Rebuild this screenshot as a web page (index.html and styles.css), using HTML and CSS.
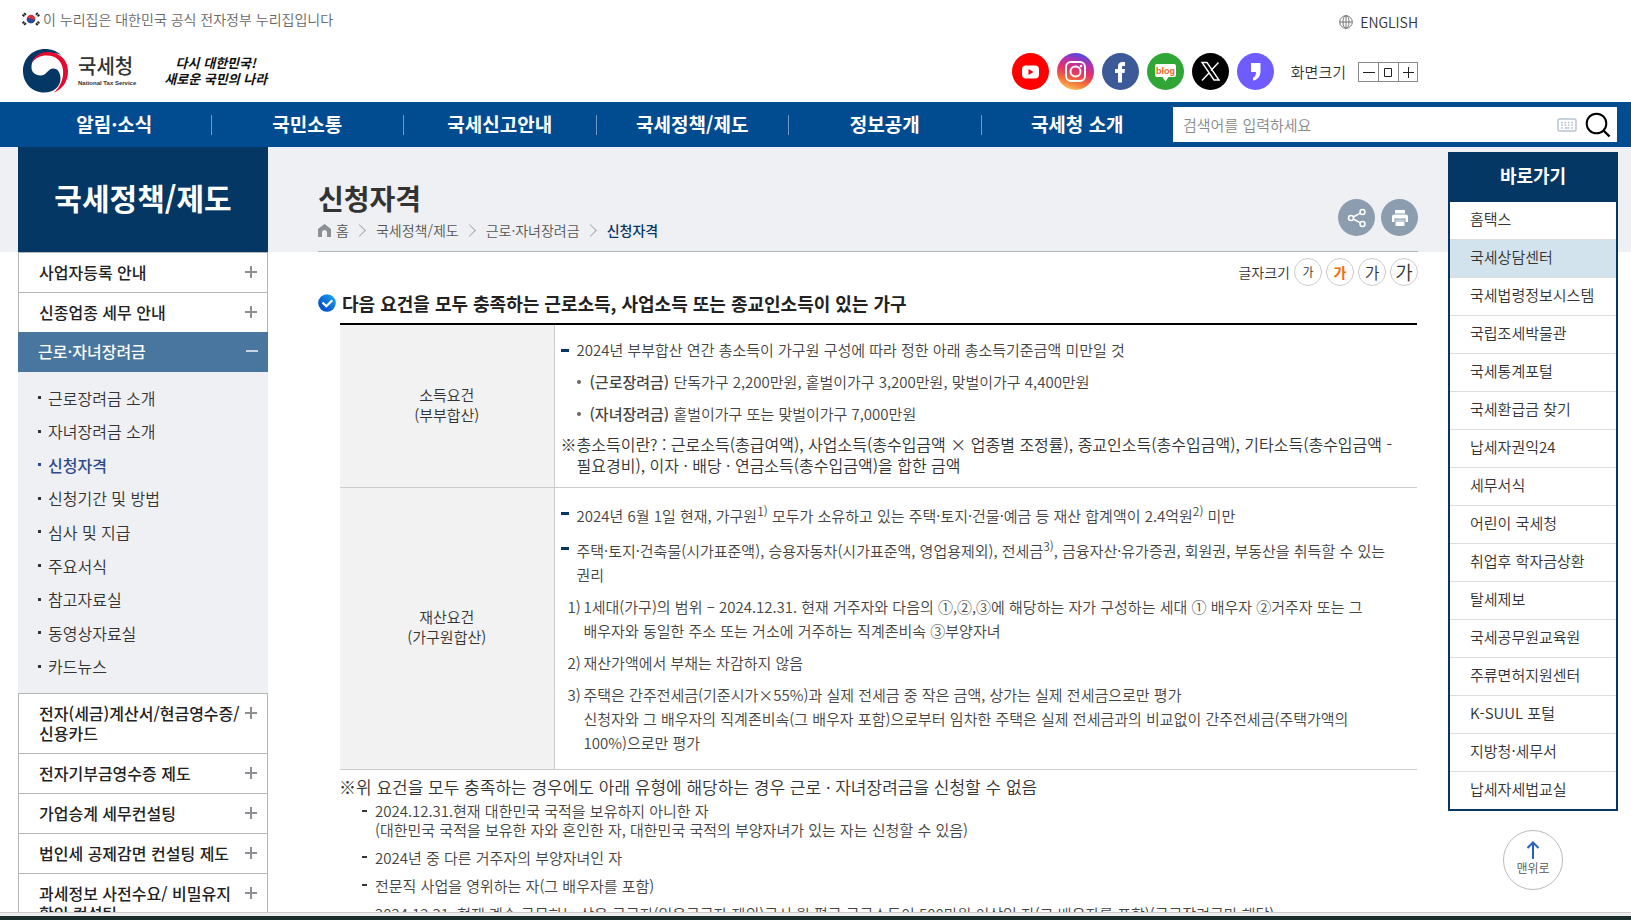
FILE: index.html
```html
<!DOCTYPE html>
<html lang="ko">
<head>
<meta charset="utf-8">
<title>신청자격 | 국세청</title>
<link rel="stylesheet" href="styles.css">
</head>
<body>
<div class="page">
  <header class="header">
    <div class="brand">
      <p class="gov">
        <svg width="18" height="14" viewBox="0 0 18 14" aria-hidden="true">
          <circle cx="9" cy="7" r="4.3" fill="#d9303e"/>
          <path d="M4.700 7a4.300 4.300 0 0 0 8.600 0c-1.500 1.200-3 .8-4.300 0s-3-1.600-4.300 0z" fill="#1d4fa3"/>
          <path d="M.8 4.200 3.800 1.200M14.200 1.200l3 3M.8 9.800l3 3M14.200 12.800l3-3" stroke="#222" stroke-width="2.600" stroke-dasharray="1.800 .5"/>
        </svg>
        <span>이 누리집은 대한민국 공식 전자정부 누리집입니다</span>
      </p>
      <div class="logos">
        <a class="logo" href="#">
          <svg width="45" height="44" viewBox="0 0 45 44" aria-hidden="true">
            <path d="M38 6C34 2 28 0 22 0 9 0 0 10 0 22s9 21.500 21 21.500c10 0 16.500-6 16.500-14 0-6-3-10-7-10-6 0-6.500 7-13 7C12 26.500 8 23 8.500 17 9 10 15 4.500 23 4c6-.3 11 0 15 2z" fill="#043763"/>
            <path d="M9 14C11 7 17 3 24 3c12 0 21 7.500 21 19 0 10-5 18-14 21.500C37 38 41 30 40 21 39 12 33 6.500 24 6.500 17 6.500 12 9 9 14z" fill="#e6092f"/>
          </svg>
          <span class="logo-text"><strong>국세청</strong><small>National Tax Service</small></span>
        </a>
        <p class="slogan"><span>다시 대한민국!</span><span>새로운 국민의 나라</span></p>
      </div>
    </div>
    <div class="utility">
      <a class="english" href="#">
        <svg width="14" height="14" viewBox="0 0 14 14" fill="none" stroke="#777" aria-hidden="true"><circle cx="7" cy="7" r="6.300"/><ellipse cx="7" cy="7" rx="3" ry="6.300"/><path d="M.7 7h12.600M7 .7v12.600"/></svg>
        ENGLISH</a>
      <div class="tools">
        <ul class="social">
          <li><a href="#" aria-label="유튜브"><svg viewBox="0 0 37 37"><circle cx="18.500" cy="18.500" r="18.500" fill="#fe0000"/><rect x="10" y="12.500" width="17" height="13" rx="4" fill="#fff"/><path d="m16.500 16 5 3-5 3z" fill="#fe0000"/></svg></a></li>
          <li><a href="#" aria-label="인스타그램"><svg viewBox="0 0 37 37"><defs><linearGradient id="ig" x1=".3" y1="1" x2=".6" y2="0"><stop offset="0" stop-color="#fcc755"/><stop offset=".25" stop-color="#f4703a"/><stop offset=".5" stop-color="#e73462"/><stop offset=".75" stop-color="#b830a8"/><stop offset="1" stop-color="#4b4ae6"/></linearGradient></defs><circle cx="18.500" cy="18.500" r="18.500" fill="url(#ig)"/><g fill="none" stroke="#fff" stroke-width="2"><rect x="9" y="9" width="19" height="19" rx="5"/><circle cx="18.500" cy="18.500" r="5"/></g><circle cx="24" cy="13" r="1.300" fill="#fff"/></svg></a></li>
          <li><a href="#" aria-label="페이스북"><svg viewBox="0 0 37 37"><circle cx="18.500" cy="18.500" r="18.500" fill="#3c5a98"/><path d="M16 29.500V20h-3v-4h3v-2.500c0-3 1.600-4.500 4.500-4.500H23v4h-1.800c-1 0-1.200.5-1.200 1.300V16h3l-.5 4H20v9.500z" fill="#fff"/></svg></a></li>
          <li><a href="#" aria-label="블로그"><svg viewBox="0 0 37 37"><circle cx="18.500" cy="18.500" r="18.500" fill="#30a636"/><path d="M10 11h17a2 2 0 0 1 2 2v9a2 2 0 0 1-2 2h-5.500l-3 4.500-3-4.500H10a2 2 0 0 1-2-2v-9a2 2 0 0 1 2-2z" fill="#fff"/><text x="18.500" y="20.500" class="blog-text">blog</text></svg></a></li>
          <li><a href="#" aria-label="엑스"><svg viewBox="0 0 37 37"><circle cx="18.500" cy="18.500" r="18.500"/><path d="M10 9.500h5L27 27h-5zM26.500 9.500l-7.500 8M17 20l-7 7.500" fill="none" stroke="#fff" stroke-width="1.400"/></svg></a></li>
          <li><a href="#" aria-label="스레드"><svg viewBox="0 0 37 37"><circle cx="18.500" cy="18.500" r="18.500" fill="#6e5cff"/><path d="M14 10h9.500v8c0 5-2.500 9-7.500 9.500v-3c2-.5 2.800-2 3-5.500h-5z" fill="#fff"/></svg></a></li>
        </ul>
        <div class="zoom">
          <span>화면크기</span>
          <div class="zoom-buttons">
            <button type="button" aria-label="축소"><svg width="12" height="12" viewBox="0 0 12 12"><path d="M0 6.500h12"/></svg></button>
            <button type="button" aria-label="기본"><svg width="12" height="12" viewBox="0 0 12 12"><path d="M2.500 2.500h7v8h-7z"/></svg></button>
            <button type="button" aria-label="확대"><svg width="12" height="12" viewBox="0 0 12 12"><path d="M1 6.500h11M6.500 1v11"/></svg></button>
          </div>
        </div>
      </div>
    </div>
  </header>

  <div class="gnb">
    <nav aria-label="주 메뉴">
      <ul class="menu">
        <li><a href="#">알림·소식</a></li>
        <li><a href="#">국민소통</a></li>
        <li><a href="#">국세신고안내</a></li>
        <li><a href="#">국세정책/제도</a></li>
        <li><a href="#">정보공개</a></li>
        <li><a href="#">국세청 소개</a></li>
      </ul>
    </nav>
    <form class="search">
      <input type="text" aria-label="검색어" placeholder="검색어를 입력하세요">
      <button type="button" aria-label="가상 키보드"><svg width="20" height="14" viewBox="0 0 20 14" fill="none" stroke="#b9c3d4"><rect x="1" y="1" width="18" height="12" rx="1.500" stroke-width="1.500"/><path d="M4 4.500h12M4 7h12" stroke-width="1.300" stroke-dasharray="1.800 1.600"/><path d="M4 10h1.800M7.500 10h5M14.200 10H16" stroke-width="1.300"/></svg></button>
      <button type="submit" aria-label="검색"><svg width="26" height="26" viewBox="0 0 26 26" fill="none" stroke="#000" stroke-width="2"><circle cx="11.500" cy="11.500" r="9.800"/><path d="m18.500 18.500 6 6" stroke-width="2.400"/></svg></button>
    </form>
  </div>

  <div class="body">
    <nav class="side" aria-label="하위 메뉴">
      <h2>국세정책/제도</h2>
      <ul class="side-list">
        <li><a class="plus" href="#">사업자등록 안내</a></li>
        <li><a class="plus" href="#">신종업종 세무 안내</a></li>
        <li class="open">
          <a class="minus" href="#">근로·자녀장려금</a>
          <ul class="sub">
            <li><a href="#">근로장려금 소개</a></li>
            <li><a href="#">자녀장려금 소개</a></li>
            <li class="on"><a href="#">신청자격</a></li>
            <li><a href="#">신청기간 및 방법</a></li>
            <li><a href="#">심사 및 지급</a></li>
            <li><a href="#">주요서식</a></li>
            <li><a href="#">참고자료실</a></li>
            <li><a href="#">동영상자료실</a></li>
            <li><a href="#">카드뉴스</a></li>
          </ul>
        </li>
        <li><a class="plus" href="#"><span>전자(세금)계산서/현금영수증/<wbr>신용카드</span></a></li>
        <li><a class="plus" href="#">전자기부금영수증 제도</a></li>
        <li><a class="plus" href="#">가업승계 세무컨설팅</a></li>
        <li><a class="plus" href="#">법인세 공제감면 컨설팅 제도</a></li>
        <li><a class="plus" href="#">과세정보 사전수요/ 비밀유지 확인 컨설팅</a></li>
      </ul>
    </nav>

    <main class="main">
      <div class="title-bar">
        <div>
          <h1>신청자격</h1>
          <ol class="crumbs">
            <li><a href="#"><svg width="13" height="13" viewBox="0 0 13 13" aria-hidden="true"><path d="M6.500 0 13 5v8H9V8.500a2.500 2.500 0 0 0-5 0V13H0V5z" fill="#8b8f96"/></svg>홈</a></li>
            <li><a href="#">국세정책/제도</a></li>
            <li><a href="#">근로·자녀장려금</a></li>
            <li><a href="#" aria-current="page">신청자격</a></li>
          </ol>
        </div>
        <div class="actions">
          <button type="button" aria-label="공유"><svg width="20" height="20" viewBox="0 0 20 20" fill="none" stroke="#fff" stroke-width="1.500"><circle cx="4" cy="10" r="2.500"/><circle cx="15.500" cy="4" r="2.500"/><circle cx="15.500" cy="16" r="2.500"/><path d="m6.300 9 7-3.800M6.300 11l7 3.800"/></svg></button>
          <button type="button" aria-label="인쇄"><svg width="18" height="18" viewBox="0 0 18 18" fill="#fff"><path d="M4 1h10v3.500H4zM3 5.500h12a2 2 0 0 1 2 2V13h-2.500V9.500h-11V13H1V7.500a2 2 0 0 1 2-2zM4.500 13h9v4h-9z"/><path d="M4.500 10.500h9v2.500h-9z" fill="#c5ced7"/></svg></button>
        </div>
      </div>
      <div class="font-size">
        <span>글자크기</span>
        <button type="button" class="s">가</button>
        <button type="button" class="m">가</button>
        <button type="button" class="l">가</button>
        <button type="button" class="xl">가</button>
      </div>

      <h3 class="heading">
        <svg width="18" height="18" viewBox="0 0 18 18" aria-hidden="true"><defs><linearGradient id="ck" x1="0" y1="1" x2="1" y2="0"><stop offset=".3" stop-color="#0757cf"/><stop offset="1" stop-color="#18b1ef"/></linearGradient></defs><circle cx="9" cy="9" r="8.800" fill="url(#ck)"/><path d="m4.500 8.500 3.800 3.800 6-6" fill="none" stroke="#fff" stroke-width="2.200"/></svg>
        다음 요건을 모두 충족하는 근로소득, 사업소득 또는 종교인소득이 있는 가구
      </h3>

      <table class="terms">
        <tbody>
          <tr>
            <th scope="row">소득요건<br>(부부합산)</th>
            <td>
              <ul class="dash">
                <li>2024년 부부합산 연간 총소득이 가구원 구성에 따라 정한 아래 총소득기준금액 미만일 것</li>
              </ul>
              <ul class="dot">
                <li><strong>(근로장려금)</strong> 단독가구 2,200만원, 홑벌이가구 3,200만원, 맞벌이가구 4,400만원</li>
                <li><strong>(자녀장려금)</strong> 홑벌이가구 또는 맞벌이가구 7,000만원</li>
              </ul>
              <p class="note">총소득이란? : 근로소득(총급여액), 사업소득(총수입금액 × 업종별 조정률), 종교인소득(총수입금액), 기타소득(총수입금액 - 필요경비), 이자 · 배당 · 연금소득(총수입금액)을 합한 금액</p>
            </td>
          </tr>
          <tr>
            <th scope="row">재산요건<br>(가구원합산)</th>
            <td>
              <ul class="dash">
                <li>2024년 6월 1일 현재, 가구원<sup>1)</sup> 모두가 소유하고 있는 주택·토지·건물·예금 등 재산 합계액이 2.4억원<sup>2)</sup> 미만</li>
                <li>주택·토지·건축물(시가표준액), 승용자동차(시가표준액, 영업용제외), 전세금<sup>3)</sup>, 금융자산·유가증권, 회원권, 부동산을 취득할 수 있는<br>권리</li>
              </ul>
              <ol class="paren">
                <li>1세대(가구)의 범위 – 2024.12.31. 현재 거주자와 다음의 ①,②,③에 해당하는 자가 구성하는 세대 ① 배우자 ②거주자 또는 그<br>배우자와 동일한 주소 또는 거소에 거주하는 직계존비속 ③부양자녀</li>
                <li>재산가액에서 부채는 차감하지 않음</li>
                <li>주택은 간주전세금(기준시가×55%)과 실제 전세금 중 작은 금액, 상가는 실제 전세금으로만 평가<br>신청자와 그 배우자의 직계존비속(그 배우자 포함)으로부터 임차한 주택은 실제 전세금과의 비교없이 간주전세금(주택가액의<br>100%)으로만 평가</li>
              </ol>
            </td>
          </tr>
        </tbody>
      </table>

      <div class="exclusions">
        <p class="note">위 요건을 모두 충족하는 경우에도 아래 유형에 해당하는 경우 근로 · 자녀장려금을 신청할 수 없음</p>
        <ul>
          <li>2024.12.31.현재 대한민국 국적을 보유하지 아니한 자<br>(대한민국 국적을 보유한 자와 혼인한 자, 대한민국 국적의 부양자녀가 있는 자는 신청할 수 있음)</li>
          <li>2024년 중 다른 거주자의 부양자녀인 자</li>
          <li>전문직 사업을 영위하는 자(그 배우자를 포함)</li>
          <li>2024.12.31. 현재 계속 근무하는 상용 근로자(일용근로자 제외)로서 월 평균 근로소득이 500만원 이상인 자(그 배우자를 포함)(근로장려금만 해당)</li>
        </ul>
      </div>
    </main>

    <aside class="quick">
      <div class="quick-box">
        <h2>바로가기</h2>
        <ul>
          <li><a href="#">홈택스</a></li>
          <li><a class="on" href="#">국세상담센터</a></li>
          <li><a href="#">국세법령정보시스템</a></li>
          <li><a href="#">국립조세박물관</a></li>
          <li><a href="#">국세통계포털</a></li>
          <li><a href="#">국세환급금 찾기</a></li>
          <li><a href="#">납세자권익24</a></li>
          <li><a href="#">세무서식</a></li>
          <li><a href="#">어린이 국세청</a></li>
          <li><a href="#">취업후 학자금상환</a></li>
          <li><a href="#">탈세제보</a></li>
          <li><a href="#">국세공무원교육원</a></li>
          <li><a href="#">주류면허지원센터</a></li>
          <li><a href="#">K-SUUL 포털</a></li>
          <li><a href="#">지방청·세무서</a></li>
          <li><a href="#">납세자세법교실</a></li>
        </ul>
      </div>
      <a class="top" href="#">
        <svg width="14" height="18" viewBox="0 0 14 18" fill="none" stroke="#2762b8" stroke-width="2" aria-hidden="true"><path d="M7 18V1.500M1.500 7 7 1.500 12.500 7"/></svg>
        맨위로
      </a>
    </aside>
  </div>
  <div class="frame-edge"></div>
</div>
</body>
</html>
```

FILE: styles.css
```css
* { box-sizing: border-box; }

body, h1, h2, h3, p, ul, ol { margin: 0; padding: 0; }

body {
  font-family: "Noto Sans CJK KR", "Noto Sans", sans-serif;
  font-size: 16px;
  font-weight: 350;
  color: #333;
  background: #fff;
  word-break: keep-all;
}

ul, ol { list-style: none; }
a { color: inherit; text-decoration: none; }
svg { display: block; flex: none; }

button {
  font: inherit;
  color: inherit;
  padding: 0;
  border: 0;
  background: none;
  cursor: pointer;
}

.page {
  display: flex;
  flex-direction: column;
  height: 100vh;
  overflow: hidden;
}

/* header */
.header {
  flex: none;
  display: flex;
  justify-content: space-between;
  padding: 9px 213px 9px 22px;
}

.gov {
  display: flex;
  align-items: center;
  gap: 3px;
  font-size: 14px;
  line-height: 20px;
  color: #666;
}

.logos {
  display: flex;
  align-items: center;
  gap: 28px;
  margin-top: 20px;
  padding-left: 1px;
}

.logo { display: flex; align-items: center; gap: 10px; }
.logo-text { display: flex; flex-direction: column; }
.logo-text strong { font-size: 20px; font-weight: 500; line-height: 22px; padding-bottom: 2px; }
.logo-text small {
  font-family: "Liberation Sans", sans-serif;
  font-size: 6px;
  font-weight: 700;
  line-height: 8px;
}

.slogan {
  font-size: 13px;
  font-style: italic;
  font-weight: 700;
  line-height: 16px;
  color: #111;
  text-align: center;
}
.slogan span { display: block; }

.utility { display: flex; flex-direction: column; align-items: flex-end; }

.english {
  display: flex;
  align-items: center;
  gap: 7px;
  padding-top: 1px;
  font-size: 14px;
  line-height: 24px;
}

.tools { display: flex; align-items: center; gap: 17px; margin-top: 19px; }
.social { display: flex; gap: 8px; }
.social svg { width: 37px; height: 37px; }
.blog-text {
  font: 700 9px "Liberation Sans", sans-serif;
  fill: #f26522;
  text-anchor: middle;
}

.zoom { display: flex; align-items: center; gap: 12px; font-size: 15px; }
.zoom-buttons {
  display: grid;
  grid-template-columns: repeat(3, 1fr);
  width: 60px;
  border: 1px solid #888;
}
.zoom-buttons button { display: grid; place-items: center; height: 18px; }
.zoom-buttons button + button { border-left: 1px solid #888; }
.zoom-buttons path { fill: none; stroke: #222; }

/* global menu */
.gnb {
  flex: none;
  display: flex;
  align-items: center;
  height: 45px;
  padding: 0 14px 0 18px;
  background: #014b90;
}
.gnb nav { flex: 1; }
.menu { display: grid; grid-template-columns: repeat(6, 1fr); }
.menu li {
  height: 20px;
  font-size: 19px;
  font-weight: 700;
  line-height: 17px;
  text-align: center;
  color: #fff;
}
.menu li + li { border-left: 1px solid #6f99c2; }

.search {
  flex: 0 0 444px;
  display: flex;
  align-items: center;
  gap: 8px;
  height: 35px;
  padding: 0 6px 0 10px;
  background: #fff;
}
.search input {
  flex: 1;
  min-width: 0;
  padding: 0;
  border: 0;
  outline: 0;
  font: inherit;
  font-size: 15px;
}
.search input::placeholder { color: #888; }

/* columns */
.body {
  flex: 1;
  min-height: 0;
  display: flex;
  align-items: flex-start;
  padding: 0 13px 0 18px;
  overflow: hidden;
  background: linear-gradient(#eff0f4 105px, #fff 0);
}

.side { flex: none; width: 250px; }
.side h2 {
  height: 105px;
  font-size: 30px;
  font-weight: 700;
  line-height: 101px;
  text-align: center;
  color: #fff;
  background: #043763;
}
.side-list > li { border: 1px solid #b5b6b8; border-bottom: 0; }
.side-list > li > a {
  display: flex;
  justify-content: space-between;
  gap: 2px;
  padding: 9px 10px 10px 20px;
  font-weight: 500;
  line-height: 20px;
  color: #222;
}
.plus::after, .minus::after {
  content: "";
  flex: none;
  width: 12px;
  height: 20px;
  background: linear-gradient(#8d8f92, #8d8f92) center / 12px 2px no-repeat;
}
.plus::after {
  background:
    linear-gradient(#8d8f92, #8d8f92) center / 12px 2px no-repeat,
    linear-gradient(#8d8f92, #8d8f92) center / 2px 12px no-repeat;
}
.minus::after { background-image: linear-gradient(#c8d6e2, #c8d6e2); }
.side-list > .open { border: 0; }
.side-list > .open > a { padding-bottom: 11px; color: #fff; background: #48769e; }

.sub {
  display: grid;
  grid-auto-rows: 1fr;
  min-height: 321px;
  padding: 9px 0 10px;
  background: #eff0f4;
}
.sub li {
  display: flex;
  align-items: center;
  gap: 7px;
  padding-left: 20px;
  color: #333;
}
.sub li::before {
  content: "";
  width: 3px;
  height: 3px;
  background: currentColor;
}
.sub .on { color: #2c4a8c; font-weight: 500; }

/* content */
.main { flex: 1; min-width: 0; margin: 0 30px 0 50px; }

.title-bar {
  display: flex;
  justify-content: space-between;
  align-items: flex-end;
  height: 105px;
  padding-bottom: 10px;
  border-bottom: 1px solid #b0b7c0;
}
.title-bar h1 { font-size: 28px; font-weight: 700; line-height: 40px; }

.crumbs { display: flex; margin-top: 1px; font-size: 14px; line-height: 22px; color: #555; }
.crumbs li { display: flex; align-items: center; }
.crumbs a { display: flex; align-items: center; gap: 5px; }
.crumbs li + li::before {
  content: "";
  width: 8px;
  height: 8px;
  margin: 0 12px 0 6px;
  border: solid #a5a9b0;
  border-width: 1px 1px 0 0;
  transform: rotate(45deg);
}
.crumbs [aria-current] { font-weight: 500; color: #043763; }

.actions { display: flex; gap: 6px; padding-bottom: 5px; }
.actions button {
  display: grid;
  place-items: center;
  width: 37px;
  height: 37px;
  border-radius: 50%;
  background: #8b9dae;
}

.font-size {
  display: flex;
  justify-content: flex-end;
  align-items: center;
  gap: 4px;
  padding-top: 6px;
  font-size: 14px;
}
.font-size button {
  width: 28px;
  height: 28px;
  border: 1px solid #ccc;
  border-radius: 50%;
  line-height: 24px;
}
.font-size .s { font-size: 12px; }
.font-size .m { font-size: 14px; font-weight: 700; color: #f60; }
.font-size .l { font-size: 16px; }
.font-size .xl { font-size: 19px; }

.heading {
  display: flex;
  align-items: center;
  gap: 6px;
  margin-top: 3px;
  font-size: 18px;
  font-weight: 700;
  line-height: 28px;
  color: #222;
}

.terms {
  width: calc(100% - 23px);
  margin: 6px 1px 0 22px;
  border-collapse: collapse;
  border-top: 2px solid #000;
}
.terms tr { border-bottom: 1px solid #ccc; }
.terms th {
  width: 214px;
  padding: 0 0 3px;
  border-right: 1px solid #ccc;
  font-size: 15px;
  font-weight: 350;
  line-height: 20px;
  background: #f2f2f2;
}
.terms td { padding: 13px 0 11px 6px; line-height: 24px; }
.terms li { position: relative; margin-bottom: 8px; font-size: 15px; color: #444; }
.terms sup { font-size: 12px; line-height: 20px; }

.dash li { padding-left: 16px; }
.dash li::before {
  content: "";
  position: absolute;
  left: 0;
  top: 11px;
  width: 8px;
  height: 3px;
  background: #043763;
}
.dot li { padding-left: 29px; }
.dot li::before {
  content: "";
  position: absolute;
  left: 16px;
  top: 10px;
  width: 4px;
  height: 4px;
  border-radius: 50%;
  background: #666;
}
.dot strong { font-weight: 500; }

.paren { counter-reset: paren; }
.paren li { padding-left: 23px; counter-increment: paren; }
.paren li:last-child { margin-bottom: 3px; }
.paren li::before {
  content: counter(paren) ")";
  position: absolute;
  left: 7px;
}

.note { display: flex; line-height: 21px; }
.note::before { content: "※"; flex: none; width: 16px; }

.exclusions { padding-left: 21px; }
.exclusions .note { margin-top: 5px; font-size: 17px; line-height: 24px; }
.exclusions .note::before { width: 17px; }
.exclusions ul { display: grid; gap: 8px; margin-top: 2px; padding-left: 23px; }
.exclusions li {
  position: relative;
  padding-left: 13px;
  font-size: 15px;
  line-height: 19px;
  color: #444;
}
.exclusions li + li { padding-top: 1px; }
.exclusions li::before {
  content: "";
  position: absolute;
  left: 0;
  top: 9px;
  width: 5px;
  height: 2px;
  background: #333;
}

/* quick links */
.quick { flex: none; width: 170px; padding-top: 5px; }
.quick-box { border: 2px solid #043763; border-top: 0; background: #fff; }
.quick h2 {
  padding-bottom: 3px;
  font-size: 18px;
  font-weight: 700;
  line-height: 47px;
  text-align: center;
  color: #fff;
  background: #043763;
}
.quick li a {
  display: block;
  padding: 0 0 3px 20px;
  font-size: 15px;
  line-height: 34px;
}
.quick li + li { border-top: 1px solid #ddd; }
.quick .on { background: #d3e3ed; }

.top {
  display: flex;
  flex-direction: column;
  align-items: center;
  width: 60px;
  height: 60px;
  margin: 19px auto 0;
  padding-top: 10px;
  border: 1px solid #bbb;
  border-radius: 50%;
  font-size: 12px;
  line-height: 18px;
  color: #555;
}

.frame-edge {
  flex: none;
  height: 8px;
  border-top: 1px solid #ccc;
  border-bottom: 4px solid #1c2c2a;
  background: #eee;
}
```
